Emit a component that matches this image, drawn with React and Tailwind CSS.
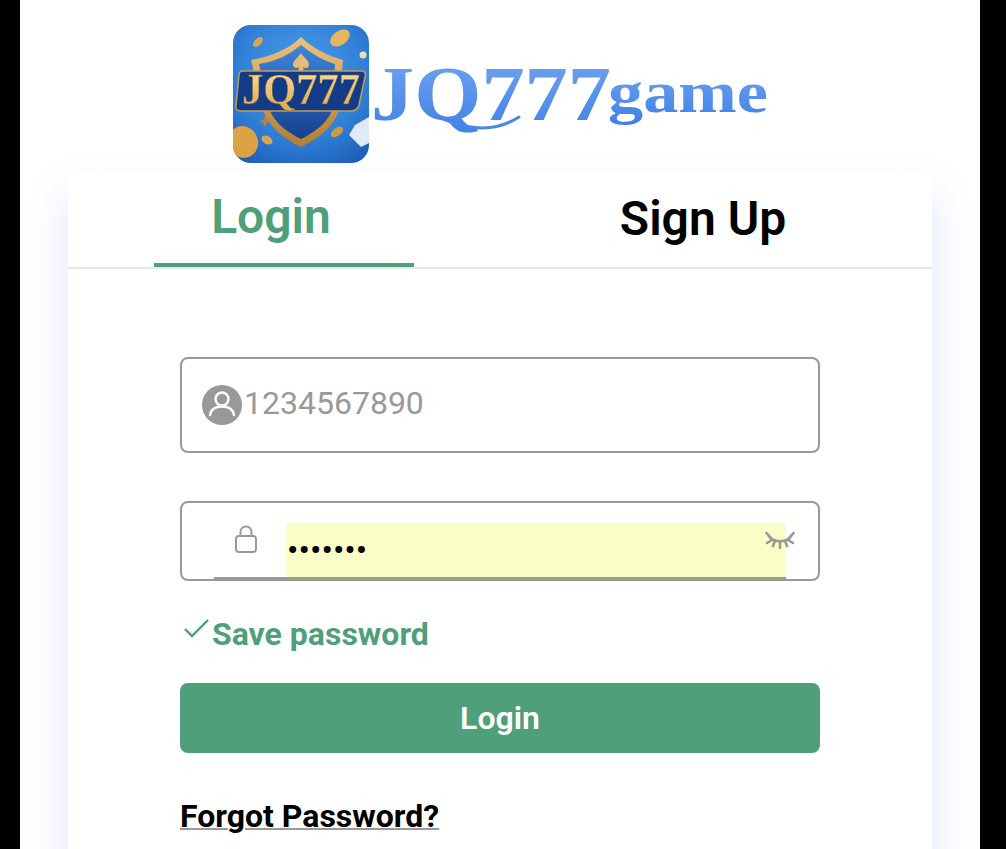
import React from 'react'

const Logo = () => (
    <svg width="540" height="140" viewBox="0 0 540 140" className="blur-[0.6px]">
        <defs>
            <radialGradient id="tile" cx="0.5" cy="0.35" r="0.8">
                <stop offset="0" stopColor="#4d9eea" />
                <stop offset="0.6" stopColor="#2f7fd6" />
                <stop offset="1" stopColor="#1c58b4" />
            </radialGradient>
            <linearGradient id="gold" x1="0" y1="0" x2="0" y2="1">
                <stop offset="0" stopColor="#eec27a" />
                <stop offset="1" stopColor="#b47d30" />
            </linearGradient>
            <linearGradient id="inner" x1="0" y1="0" x2="0" y2="1">
                <stop offset="0" stopColor="#3d86dc" />
                <stop offset="1" stopColor="#163f8e" />
            </linearGradient>
            <linearGradient id="lettering" x1="0" y1="0" x2="0" y2="1">
                <stop offset="0" stopColor="#fbe3a6" />
                <stop offset="1" stopColor="#d9a34e" />
            </linearGradient>
            <linearGradient id="word" x1="0" y1="0" x2="0" y2="1">
                <stop offset="0" stopColor="#74a6f0" />
                <stop offset="1" stopColor="#3f80e6" />
            </linearGradient>
            <clipPath id="tileClip">
                <rect x="0" y="0" width="136" height="138" rx="18" />
            </clipPath>
        </defs>
        <g clipPath="url(#tileClip)">
            <rect x="0" y="0" width="136" height="138" fill="url(#tile)" />
            <path d="M68 12 C80 24 96 31 110 35 L105 88 C98 104 84 114 68 122 C52 114 38 104 31 88 L18 35 C40 31 56 24 68 12 Z" fill="url(#gold)" />
            <path d="M68 20 C80 30 92 36 102 39 L98 88 C92 100 80 108 68 114 C56 108 44 100 38 88 L26 39 C44 36 56 30 68 20 Z" fill="url(#inner)" />
            <path d="M68 28 C71 33 76 35 76 40 C76 43 72 44 70 42 L71 47 L65 47 L66 42 C64 44 60 43 60 40 C60 35 65 33 68 28 Z" fill="#e8bc72" />
            <path d="M10 46 H128 C132 46 133 48 132 52 L126 80 C125 84 122 86 118 86 H8 C4 86 2 84 3 80 L6 50 C6 47 8 46 10 46 Z" fill="#123c8a" stroke="#c99a4c" strokeWidth="1.5" />
            <text x="68" y="79" textAnchor="middle" fontFamily="'Liberation Serif', serif" fontWeight="700" fontSize="44" textLength="118" lengthAdjust="spacingAndGlyphs" fill="url(#lettering)" stroke="#7a5620" strokeWidth="0.5">JQ777</text>
            <ellipse cx="107" cy="13" rx="11" ry="7" transform="rotate(-35 107 13)" fill="#e9b65e" />
            <ellipse cx="25" cy="17" rx="6" ry="3.5" transform="rotate(-45 25 17)" fill="#d9a654" />
            <circle cx="130" cy="30" r="3.5" fill="#efe0b0" />
            <ellipse cx="10" cy="117" rx="15" ry="16" transform="rotate(-25 10 117)" fill="#dba346" />
            <ellipse cx="34" cy="115" rx="6" ry="4" transform="rotate(30 34 115)" fill="#d9a654" />
            <ellipse cx="104" cy="107" rx="7" ry="4" transform="rotate(-35 104 107)" fill="#cf9a45" />
            <path d="M32 91 L34 95 L38 96 L34 98 L32 102 L30 98 L26 96 L30 95 Z" fill="#b8803a" />
            <path d="M136 92 L122 100 L116 110 L128 122 L136 118 Z" fill="#dfeaf6" />
        </g>
        <text x="138" y="95" fontFamily="'Liberation Serif', serif" fontWeight="700" fontSize="78" textLength="240" lengthAdjust="spacingAndGlyphs" fill="url(#word)">JQ777</text>
        <path d="M205 92 C225 100 255 112 286 92" fill="none" stroke="#4a86e6" strokeWidth="3" strokeLinecap="round" />
        <text x="375" y="87" fontFamily="'Liberation Serif', serif" fontWeight="700" fontSize="60" textLength="160" lengthAdjust="spacingAndGlyphs" fill="url(#word)">game</text>
    </svg>
)

const UserBadge = () => (
    <svg width="40" height="40" viewBox="0 0 40 40" className="shrink-0">
        <circle cx="20" cy="20" r="20" fill="#999999" />
        <circle cx="20" cy="14" r="6.5" fill="none" stroke="#fff" strokeWidth="2.4" />
        <path d="M8 30 C9 24 14 21.5 20 21.5 C26 21.5 31 24 32 30" fill="none" stroke="#fff" strokeWidth="2.4" strokeLinecap="round" />
    </svg>
)

const LockIcon = () => (
    <svg width="24" height="28" viewBox="0 0 24 28" fill="none" stroke="#999999" strokeWidth="2">
        <rect x="2" y="11" width="20" height="16" rx="3" />
        <path d="M6.5 11 V7 C6.5 3.5 9 1.5 12 1.5 C15 1.5 17.5 3.5 17.5 7 V11" />
    </svg>
)

const ClosedEye = () => (
    <svg width="30" height="20" viewBox="0 0 30 20" fill="none" stroke="#999999" strokeWidth="2.6" strokeLinecap="round">
        <path d="M4 6 C8 13 22 13 26 6" />
        <path d="M1.5 3 L5 7 M2 13 L7 10 M8 16 L9.5 12 M15 18 V13 M22 16 L20.5 12 M28 13 L23 10 M28.5 3 L25 7" />
    </svg>
)

const App = () => {
    return (
        <div className="h-[849px] overflow-hidden bg-black pl-[20px] pr-[26px] font-['Roboto',sans-serif]">
            <div className="h-full bg-white pt-[25px]">
                <div className="flex h-[145px] justify-center pl-[5px]">
                    <Logo />
                </div>

                <div className="mx-[48px] h-[800px] bg-white shadow-[0_24px_40px_rgba(70,110,255,0.17)]">
                    <div className="flex h-[99px] border-b-2 border-[#e8e8e8]">
                        <div className="flex flex-1 justify-center">
                            <button className="relative h-[97px] w-[260px] pb-[4px] pr-[26px] text-[48px] font-semibold text-[#4f9f7b]">
                                Login
                                <span className="absolute bottom-0 left-0 h-[4px] w-full bg-[#4f9f7b]" />
                            </button>
                        </div>
                        <div className="flex flex-1 justify-center">
                            <button className="h-[97px] w-[260px] pr-[26px] text-[48px] font-semibold text-black">
                                Sign Up
                            </button>
                        </div>
                    </div>

                    <div className="px-[112px] pt-[88px]">
                        <div className="flex h-[96px] items-center rounded-lg border-2 border-[#999999] pl-[20px]">
                            <UserBadge />
                            <span className="ml-[2px] -translate-y-[2px] text-[32px] text-[#999999]">1234567890</span>
                        </div>

                        <div className="mt-[48px] flex h-[80px] rounded-lg border-2 border-[#999999] pl-[32px] pr-[32px] pt-[20px]">
                            <div className="flex h-[56px] w-[72px] shrink-0 border-b-2 border-[#999999] pl-[20px] pt-[2px]">
                                <LockIcon />
                            </div>
                            <div className="relative h-[56px] flex-1">
                                <input
                                    type="password"
                                    readOnly
                                    value="1234567"
                                    className="h-full w-full border-b-2 border-[#a0a078] bg-[#fbfec6] pl-px text-[34px] text-black outline-none"
                                />
                                <span className="absolute left-[479px] top-[7px]">
                                    <ClosedEye />
                                </span>
                            </div>
                        </div>

                        <div className="mt-[33px] flex h-[40px] items-center text-[32px] font-bold text-[#4f9f7b]">
                            <svg width="26" height="22" viewBox="0 0 26 22" fill="none" stroke="#4f9f7b" strokeWidth="2.4" className="mb-[10px] ml-[4px] shrink-0">
                                <path d="M1 11 L8 18 L24 2" />
                            </svg>
                            <span className="ml-[2px]">Save password</span>
                        </div>

                        <button className="mt-[29px] h-[70px] w-full rounded-lg bg-[#4f9f7b] text-[32px] font-semibold text-white">
                            Login
                        </button>

                        <div className="mt-[44px]">
                            <a className="text-[32px] font-bold leading-[38px] text-black underline decoration-[#999999] decoration-2">
                                Forgot Password?
                            </a>
                        </div>
                    </div>
                </div>
            </div>
        </div>
    )
}

export default App
